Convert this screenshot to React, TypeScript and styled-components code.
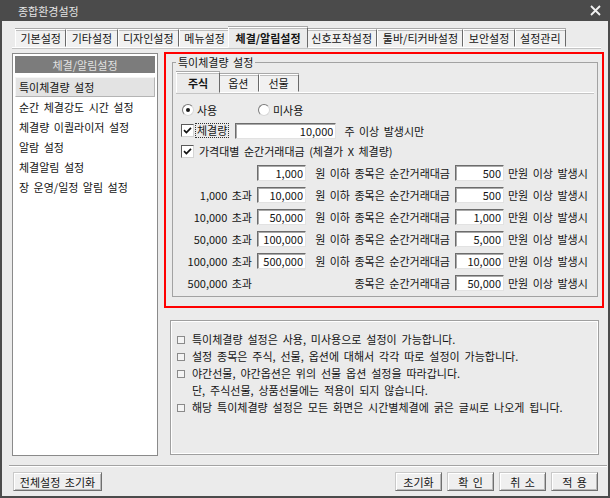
import styled, { createGlobalStyle } from 'styled-components'

const GlobalStyle = createGlobalStyle`
  html, body {
    margin: 0;
    padding: 0;
    background: #ebebeb;
  }
  body {
    font-family: "Noto Sans CJK KR", "Liberation Sans", sans-serif;
    font-size: 11px;
    word-spacing: 2px;
    color: #141414;
  }
  * {
    box-sizing: border-box;
  }
`

const Window = styled.div`
  width: 610px;
  height: 498px;
  display: flex;
  flex-direction: column;
  background: #ebebeb;
`

const TitleBar = styled.div`
  height: 21px;
  flex: none;
  display: flex;
  align-items: center;
  justify-content: space-between;
  padding: 0 9px 0 18px;
  background: #4b4b4b;
  color: #e4e4e4;
`

const Frame = styled.div`
  flex: 1;
  display: flex;
  flex-direction: column;
  padding: 7px 4px 0 10px;
  border: 2px solid #4b4b4b;
  border-top: none;
`

const TabStrip = styled.div<{ $inner?: boolean }>`
  display: flex;
  align-items: flex-end;
  height: 20px;
  flex: none;
  padding-left: ${p => (p.$inner ? '2px' : '3px')};
  margin-right: ${p => (p.$inner ? '1px' : '3px')};
  border-bottom: 1px solid #ffffff;
  box-shadow: 0 1px 0 #c4c4c4;
`

const Tab = styled.div<{ $active?: boolean; $pad: number }>`
  position: relative;
  height: ${p => (p.$active ? '21px' : '18px')};
  margin: ${p => (p.$active ? '0 -2px -1px' : '0')};
  padding: 0 ${p => (p.$active ? p.$pad + 2 : p.$pad)}px;
  display: flex;
  align-items: center;
  white-space: nowrap;
  background: ${p => (p.$active ? '#ebebeb' : '#f1f1f1')};
  border: 1px solid;
  border-color: #ffffff #6a6a6a transparent #ffffff;
  box-shadow: inset 0 1px 0 #bdbdbd, 0 -1px 0 #a8a8a8;
  font-weight: ${p => (p.$active ? 700 : 400)};
  z-index: ${p => (p.$active ? 1 : 0)};
`

const ContentRow = styled.div`
  display: flex;
  gap: 6px;
  height: 404px;
  margin-top: 4px;
  flex: none;
`

const SidePanel = styled.div`
  width: 146px;
  margin-top: 1px;
  padding: 2px;
  background: #ffffff;
  border: 1px solid #8a8a8a;
  display: flex;
  flex-direction: column;
`

const SideHeader = styled.div`
  height: 17px;
  display: flex;
  align-items: center;
  justify-content: center;
  background: #7c7c7c;
  color: #e2e2e2;
  margin-bottom: 4px;
`

const SideItem = styled.div<{ $active?: boolean }>`
  height: 20px;
  display: flex;
  align-items: center;
  padding-left: 3px;
  white-space: nowrap;
  background: ${p => (p.$active ? '#e3e3e3' : 'transparent')};
  border: 1px solid;
  border-color: ${p => (p.$active ? '#f5f5f5 #b4b4b4 #b4b4b4 #f5f5f5' : 'transparent')};
`

const MainColumn = styled.div`
  width: 440px;
  display: flex;
  flex-direction: column;
  gap: 12px;
`

const Highlight = styled.div`
  border: 2px solid #ff0000;
  padding-top: 2px;
`

const GroupBox = styled.fieldset`
  margin: 0 4px 9px 6px;
  padding: 4px 2px 2px 3px;
  min-width: 0;
  border: 1px solid #a2a2a2;
`

const GroupTitle = styled.legend`
  padding: 0 2px;
  line-height: 13px;
`

const OptionPane = styled.div`
  display: flex;
  flex-direction: column;
  padding: 7px 0 0 5px;
`

const Line = styled.div<{ $h: number }>`
  height: ${p => p.$h}px;
  display: flex;
  align-items: center;
  white-space: nowrap;
`

const RadioOption = styled.label`
  width: 76px;
  display: flex;
  align-items: center;
  gap: 3px;
  padding-left: 1px;
`

const RadioDot = styled.span<{ $on?: boolean }>`
  width: 12px;
  height: 12px;
  border-radius: 50%;
  background: #ffffff;
  border: 1px solid;
  border-color: #7a7a7a #d8d8d8 #d8d8d8 #7a7a7a;
  display: flex;
  align-items: center;
  justify-content: center;

  &::after {
    content: '';
    width: 4px;
    height: 4px;
    border-radius: 50%;
    background: ${p => (p.$on ? '#1a1a1a' : 'transparent')};
  }
`

const CheckBox = styled.span`
  width: 13px;
  height: 13px;
  flex: none;
  background: #ffffff;
  border: 1px solid;
  border-color: #5a5a5a #d4d4d4 #d4d4d4 #5a5a5a;
  display: flex;
  align-items: center;
  justify-content: center;
`

const CheckText = styled.span<{ $focus?: boolean }>`
  margin-left: ${p => (p.$focus ? '1px' : '3px')};
  padding: 0 1px;
  border: 1px dotted ${p => (p.$focus ? '#333333' : 'transparent')};
  line-height: 13px;
`

const NumField = styled.input<{ $w: number; $gap: number }>`
  width: ${p => p.$w}px;
  height: 16px;
  margin: 0 0 0 ${p => p.$gap}px;
  padding: 0 2px 0 0;
  text-align: right;
  font: inherit;
  word-spacing: 0;
  color: #141414;
  background: #ffffff;
  border: 1px solid;
  border-color: #6c6c6c #e2e2e2 #e2e2e2 #6c6c6c;
  box-shadow: inset 1px 1px 0 #a9a9a9;
  outline: none;
  flex: none;
`

const NumSlot = styled.span`
  width: 49px;
  margin-left: 5px;
  flex: none;
`

const TailText = styled.span<{ $gap: number }>`
  margin-left: ${p => p.$gap}px;
`

const RangeLabel = styled.span`
  width: 71px;
  text-align: right;
  flex: none;
`

const Clause = styled.span`
  width: 138px;
  margin-left: 6px;
  text-align: right;
  flex: none;
`

const NoteBox = styled.div`
  height: 135px;
  margin: 0 5px 0 6px;
  border: 1px solid #9f9f9f;
  box-shadow: inset 1px 1px 0 #ffffff, inset -1px -1px 0 #ffffff;
`

const NoteList = styled.ul`
  list-style: none;
  margin: 0;
  padding: 10px 0 0 6px;
  line-height: 17px;
  word-spacing: 2.4px;
`

const NoteItem = styled.li`
  display: flex;
  align-items: flex-start;
`

const Bullet = styled.span<{ $blank?: boolean }>`
  width: 15px;
  height: 17px;
  flex: none;
  display: flex;
  align-items: center;

  &::before {
    content: '';
    width: 6px;
    height: 6px;
    border: 1px solid ${p => (p.$blank ? 'transparent' : '#8a8a8a')};
    background: ${p => (p.$blank ? 'transparent' : '#f4f4f4')};
  }
`

const Separator = styled.div`
  margin: 9px -3px 0 -3px;
  border-top: 1px solid #a3a3a3;
  border-bottom: 1px solid #ffffff;
`

const ButtonBar = styled.div`
  display: flex;
  align-items: center;
  margin-top: 5px;
  padding: 0 6px 0 1px;
`

const ActionGroup = styled.div`
  display: flex;
  gap: 5px;
  margin-left: auto;
`

const PushButton = styled.button<{ $w: number }>`
  width: ${p => p.$w}px;
  height: 19px;
  padding: 0;
  font: inherit;
  word-spacing: 2px;
  color: #141414;
  background: #efefef;
  border: 1px solid;
  border-color: #c9c9c9 #6f6f6f #6f6f6f #c9c9c9;
  box-shadow: inset 1px 1px 0 #ffffff, inset -1px -1px 0 #b9b9b9;
`

const topTabs = [
  { label: '기본설정' },
  { label: '기타설정' },
  { label: '디자인설정' },
  { label: '메뉴설정' },
  { label: '체결/알림설정', active: true },
  { label: '신호포착설정' },
  { label: '툴바/티커바설정' },
  { label: '보안설정' },
  { label: '설정관리' },
]

const sideItems = [
  '특이체결량 설정',
  '순간 체결강도 시간 설정',
  '체결량 이퀄라이저 설정',
  '알람 설정',
  '체결알림 설정',
  '장 운영/일정 알림 설정',
]

const tiers = [
  { from: '', upTo: '1,000', amount: '500' },
  { from: '1,000 초과', upTo: '10,000', amount: '500' },
  { from: '10,000 초과', upTo: '50,000', amount: '1,000' },
  { from: '50,000 초과', upTo: '100,000', amount: '5,000' },
  { from: '100,000 초과', upTo: '500,000', amount: '10,000' },
  { from: '500,000 초과', upTo: null, amount: '50,000' },
]

const notes = [
  { text: '특이체결량 설정은 사용, 미사용으로 설정이 가능합니다.' },
  { text: '설정 종목은 주식, 선물, 옵션에 대해서 각각 따로 설정이 가능합니다.' },
  { text: '야간선물, 야간옵션은 위의 선물 옵션 설정을 따라갑니다.' },
  { text: '단, 주식선물, 상품선물에는 적용이 되지 않습니다.', sub: true },
  { text: '해당 특이체결량 설정은 모든 화면은 시간별체결에 굵은 글씨로 나오게 됩니다.' },
]

function CheckMark() {
  return (
    <CheckBox>
      <svg width="9" height="9" viewBox="0 0 9 9">
        <path d="M1 4.2 L3.4 6.6 L8 1.8" fill="none" stroke="#111" strokeWidth="1.7" />
      </svg>
    </CheckBox>
  )
}

export default function App() {
  return (
    <>
      <GlobalStyle />
      <Window>
        <TitleBar>
          <span>종합환경설정</span>
          <svg width="11" height="11" viewBox="0 0 11 11">
            <path d="M1 1 L10 10 M10 1 L1 10" stroke="#f2f2f2" strokeWidth="1.8" />
          </svg>
        </TitleBar>
        <Frame>
          <TabStrip>
            {topTabs.map(t => (
              <Tab key={t.label} $active={t.active} $pad={4.4}>
                {t.label}
              </Tab>
            ))}
          </TabStrip>

          <ContentRow>
            <SidePanel>
              <SideHeader>체결/알림설정</SideHeader>
              {sideItems.map((item, i) => (
                <SideItem key={item} $active={i === 0}>
                  {item}
                </SideItem>
              ))}
            </SidePanel>

            <MainColumn>
              <Highlight>
                <GroupBox>
                  <GroupTitle>특이체결량 설정</GroupTitle>
                  <TabStrip $inner>
                    <Tab $active $pad={9}>주식</Tab>
                    <Tab $pad={9}>옵션</Tab>
                    <Tab $pad={9}>선물</Tab>
                  </TabStrip>
                  <OptionPane>
                    <Line $h={20}>
                      <RadioOption>
                        <RadioDot $on />
                        사용
                      </RadioOption>
                      <RadioOption>
                        <RadioDot />
                        미사용
                      </RadioOption>
                    </Line>
                    <Line $h={21}>
                      <CheckMark />
                      <CheckText $focus>체결량</CheckText>
                      <NumField $w={101} $gap={6} readOnly value="10,000" />
                      <TailText $gap={8}>주 이상 발생시만</TailText>
                    </Line>
                    <Line $h={21}>
                      <CheckMark />
                      <CheckText>가격대별 순간거래대금 (체결가 X 체결량)</CheckText>
                    </Line>
                    {tiers.map(t => (
                      <Line $h={22} key={t.amount + t.from}>
                        <RangeLabel>{t.from}</RangeLabel>
                        {t.upTo ? (
                          <NumField $w={49} $gap={5} readOnly value={t.upTo} />
                        ) : (
                          <NumSlot />
                        )}
                        <Clause>{t.upTo ? '원 이하 종목은 순간거래대금' : '종목은 순간거래대금'}</Clause>
                        <NumField $w={49} $gap={5} readOnly value={t.amount} />
                        <TailText $gap={4}>만원 이상 발생시</TailText>
                      </Line>
                    ))}
                  </OptionPane>
                </GroupBox>
              </Highlight>

              <NoteBox>
                <NoteList>
                  {notes.map(n => (
                    <NoteItem key={n.text}>
                      <Bullet $blank={n.sub} />
                      {n.text}
                    </NoteItem>
                  ))}
                </NoteList>
              </NoteBox>
            </MainColumn>
          </ContentRow>

          <Separator />
          <ButtonBar>
            <PushButton $w={89}>전체설정 초기화</PushButton>
            <ActionGroup>
              <PushButton $w={47}>초기화</PushButton>
              <PushButton $w={47}>확 인</PushButton>
              <PushButton $w={47}>취 소</PushButton>
              <PushButton $w={47}>적 용</PushButton>
            </ActionGroup>
          </ButtonBar>
        </Frame>
      </Window>
    </>
  )
}
